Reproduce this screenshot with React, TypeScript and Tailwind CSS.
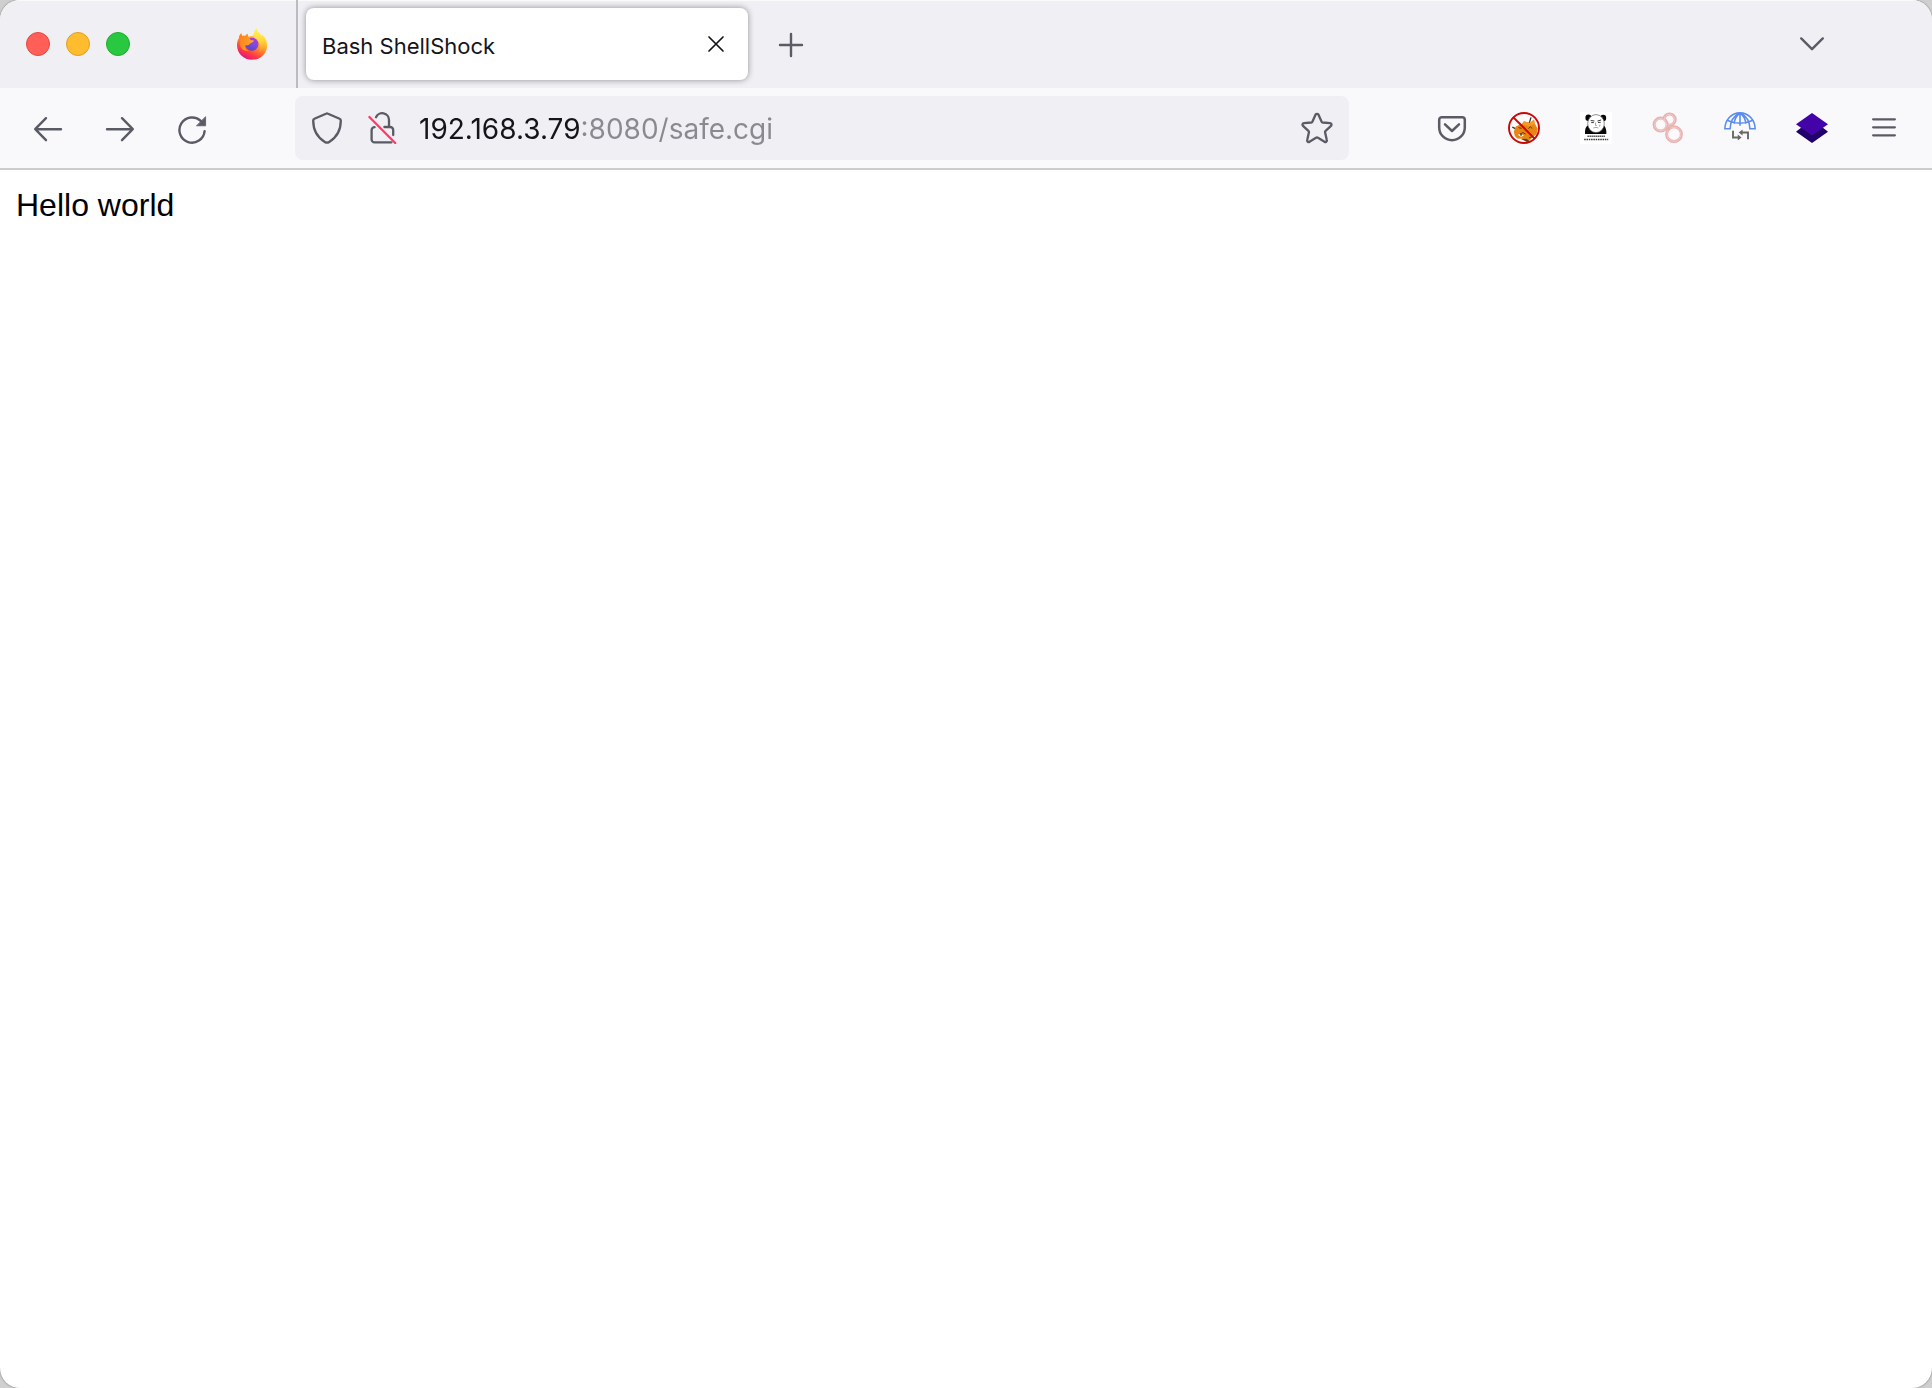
import React from 'react';

type IconProps = { className?: string };

const ArrowLeftIcon: React.FC<IconProps> = ({ className }) => (
  <svg viewBox="0 0 32 32" className={className} fill="none" stroke="currentColor" strokeWidth="2.4" strokeLinecap="round" strokeLinejoin="round">
    <path d="M29 17.2H3.4M14 6.2 3.2 17.2 14 28.2" />
  </svg>
);

const ArrowRightIcon: React.FC<IconProps> = ({ className }) => (
  <svg viewBox="0 0 32 32" className={className} fill="none" stroke="currentColor" strokeWidth="2.4" strokeLinecap="round" strokeLinejoin="round">
    <path d="M3 17.2h25.6M18 6.2l10.8 11L18 28.2" />
  </svg>
);

const ReloadIcon: React.FC<IconProps> = ({ className }) => (
  <svg viewBox="0 0 32 32" className={className} fill="none" stroke="currentColor" strokeWidth="2.4" strokeLinecap="round">
    <path d="M25 9.2A12.6 12.6 0 1 0 28.6 19.2" />
    <path d="M29.6 5v8.800h-8.800z" fill="currentColor" strokeWidth="0.8" strokeLinejoin="round" />
  </svg>
);

const ShieldIcon: React.FC<IconProps> = ({ className }) => (
  <svg viewBox="0 0 32 32" className={className} fill="none" stroke="currentColor" strokeWidth="2.3" strokeLinejoin="round">
    <path d="M15 1.700a2.200 2.200 0 0 1 2 0l11.600 5.100a1.800 1.800 0 0 1 1.200 1.800c0 8.600-3.400 16.400-11.600 21.400a4.200 4.200 0 0 1-4.400 0C5.600 25 2.200 17.200 2.200 8.600a1.800 1.800 0 0 1 1.200-1.800z" />
  </svg>
);

const LockOffIcon: React.FC<IconProps> = ({ className }) => (
  <svg viewBox="0 0 32 32" className={className} fill="none" strokeWidth="2.3" strokeLinecap="round" strokeLinejoin="round">
    <g stroke="#5b5b66">
      <path d="M9 5.200A6.800 6.800 0 0 1 22 8V15" />
      <path d="M17.400 15h5.800a3 3 0 0 1 3 3v5" />
      <path d="M7.600 15.200a3 3 0 0 0-3 3v9.200a3 3 0 0 0 3 3h16.800" />
    </g>
    <path d="M2.400 5 28.200 31" stroke="#ff3b66" strokeWidth="2.300" />
  </svg>
);

const StarIcon: React.FC<IconProps> = ({ className }) => (
  <svg viewBox="0 0 32 32" className={className} fill="none" stroke="currentColor" strokeWidth="2.3" strokeLinejoin="round">
    <path d="M14.500 2.700a1.800 1.800 0 0 1 3 0l3 6.800a1.800 1.800 0 0 0 1.400 1l7.200.7a1.500 1.500 0 0 1 .9 2.600l-5.400 5a1.800 1.800 0 0 0-.5 1.700l1.700 7.600a1.500 1.500 0 0 1-2.300 1.600l-6.500-3.900a2 2 0 0 0-2 0l-6.500 3.900a1.500 1.500 0 0 1-2.300-1.600l1.700-7.600a1.800 1.800 0 0 0-.5-1.700l-5.400-5a1.500 1.500 0 0 1 .9-2.600l7.200-.7a1.800 1.800 0 0 0 1.400-1z" />
  </svg>
);

const PocketIcon: React.FC<IconProps> = ({ className }) => (
  <svg viewBox="0 0 32 32" className={className} fill="none" stroke="currentColor" strokeWidth="2.5" strokeLinecap="round" strokeLinejoin="round">
    <path d="M5.800 5.200h20.400a2.600 2.600 0 0 1 2.600 2.600v7.600a12.800 12.800 0 0 1-25.600 0V7.800a2.600 2.600 0 0 1 2.600-2.600z" />
    <path d="m9 12.400 7 6.600 7-6.600" />
  </svg>
);

const CloseIcon: React.FC<IconProps> = ({ className }) => (
  <svg viewBox="0 0 20 20" className={className} fill="none" stroke="currentColor" strokeWidth="1.7" strokeLinecap="round">
    <path d="m3 3 14 14M17 3 3 17" />
  </svg>
);

const PlusIcon: React.FC<IconProps> = ({ className }) => (
  <svg viewBox="0 0 32 32" className={className} fill="none" stroke="currentColor" strokeWidth="2.4" strokeLinecap="round">
    <path d="M16 6v22M5 17h22" />
  </svg>
);

const ChevronIcon: React.FC<IconProps> = ({ className }) => (
  <svg viewBox="0 0 32 32" className={className} fill="none" stroke="currentColor" strokeWidth="2.4" strokeLinecap="round" strokeLinejoin="round">
    <path d="m5.200 10.400 10.800 10.800 10.800-10.800" />
  </svg>
);

const MenuIcon: React.FC<IconProps> = ({ className }) => (
  <svg viewBox="0 0 32 32" className={className} fill="none" stroke="currentColor" strokeWidth="2.2" strokeLinecap="round">
    <path d="M5.100 7.300h21.800M5.100 15.300h21.800M5.100 23.300h21.800" />
  </svg>
);

const FirefoxLogo: React.FC<IconProps> = ({ className }) => (
  <svg viewBox="0 0 32 32" className={className}>
    <defs>
      <linearGradient id="ff-body" x1="0.8" y1="0.05" x2="0.3" y2="1">
        <stop offset="0.1" stopColor="#fff04a" />
        <stop offset="0.36" stopColor="#ffb92e" />
        <stop offset="0.58" stopColor="#ff7a2a" />
        <stop offset="0.78" stopColor="#ff3a45" />
        <stop offset="1" stopColor="#e2127f" />
      </linearGradient>
      <linearGradient id="ff-globe" x1="0.7" y1="0" x2="0.4" y2="1">
        <stop offset="0" stopColor="#b237e0" />
        <stop offset="0.5" stopColor="#7f4be0" />
        <stop offset="1" stopColor="#5746c4" />
      </linearGradient>
      <linearGradient id="ff-head" x1="0" y1="0" x2="1" y2="0.6">
        <stop offset="0" stopColor="#ff7a1c" />
        <stop offset="1" stopColor="#ffa82a" />
      </linearGradient>
      <linearGradient id="ff-flame" x1="0.5" y1="0" x2="0.6" y2="1">
        <stop offset="0" stopColor="#fff45a" />
        <stop offset="0.55" stopColor="#ffd83a" />
        <stop offset="1" stopColor="#ff8a2a" />
      </linearGradient>
    </defs>
    <path
      d="M20.600.2c.2 2.600 1.600 4 3.600 6 .7.700 1.300 1.500 1.800 2.400.3-.8.3-1.400.2-2 3.200 2.700 5 6.600 5 10.600 0 8.200-6.600 14.600-15.100 14.600S1 25.200 1 17.200c0-3 .7-5.300 1.900-7.200.2-1.700 1-3.400 2.400-4.800.1 1.200.3 2 .8 2.700 1-.2 2-.1 3 .2.700-1 1.600-1.800 2.800-2.300-.3 1.300-.2 2.200.5 3 1.700-1 3.400-1.300 5-1.100.4-2.800 1.300-5.600 3.200-7.500z"
      fill="url(#ff-body)"
    />
    <path d="M20.600.2c.2 2.600 1.600 4 3.600 6 2.800 3 4.600 5.800 4.200 10.200-.3 3.600-2.200 6.600-5.800 8 2-3 2.400-7 .6-10.200-1.400-2.400-4-4-5.600-6.500.2-2.800 1.200-5.700 3-7.500z" fill="url(#ff-flame)" opacity="0.85" />
    <circle cx="15.800" cy="16.200" r="6.600" fill="url(#ff-globe)" />
    <path
      d="M2.900 10c.2-1.700 1-3.400 2.400-4.800.1 1.200.3 2 .8 2.700 1-.2 2-.1 3 .2.700-1 1.600-1.800 2.800-2.300-.3 1.600 0 2.800 1.600 4 .7.500.3 1.300 1 1.900.7.400 2 .5 3.200.5.400.8-.2 1.700-1.700 2.300-1.500.7-2.200.8-2.600 1.700-.4.800-2.200 1.300-4 .8-.8 3.200.8 5.200 3.600 6-4.600.6-8.600-2-8.800-6.400-.1-2.700.7-4-1.300-6.600z"
      fill="url(#ff-head)"
    />
  </svg>
);

const ProxyOffIcon: React.FC<IconProps> = ({ className }) => (
  <svg viewBox="0 0 32 32" className={className}>
    <circle cx="16" cy="16" r="14.800" fill="#fdfbfa" />
    <path d="M4.300 15.200 8 16.800M23 5.400l-1.800 6" stroke="#333" strokeWidth="1.3" fill="none" />
    <path d="m5.800 19.500 2-5 6.200-2.800 2-2.400 6 1.700 4-3.400.8 4.200 2.800 4.600-1 5.600-5 4-3.400 4.200-6-3.400-5-.3-2.400-2.500z" fill="#e98512" />
    <path d="m16 9.300 6 1.700 4-3.400.6 4-5 3-7-2z" fill="#f49a24" />
    <path d="m13 27 5.500-.2 3.500 2.800-3 .3z" fill="#5c4328" />
    <path d="m10.500 15.600 3 .8M20.500 16.500l2-1.800 1.500 1.800M11.500 22.200l3.500-1.600 2.500 1.400M21 25.800l3-1" stroke="#5f3906" strokeWidth="1" fill="none" />
    <path d="m9.500 22.500 4-.3 2.500 1.300-3 1.300z" fill="#fff" />
    <circle cx="13" cy="22.800" r="0.900" fill="#222" />
    <circle cx="16" cy="16" r="15" fill="none" stroke="#cc0505" strokeWidth="1.9" />
    <path d="m5.400 5.400 21.200 21.200" stroke="#cc0505" strokeWidth="2" />
  </svg>
);

const PandaIcon: React.FC<IconProps> = ({ className }) => (
  <svg viewBox="0 0 32 32" className={className}>
    <path d="M0 0h32v32H0z" fill="#fff" />
    <ellipse cx="8.400" cy="5.800" rx="3" ry="3.200" fill="#080808" />
    <ellipse cx="23.200" cy="6" rx="3" ry="3.200" fill="#080808" />
    <path d="M5 22c-.2-4 .5-7 2.500-8.500l8 4 8.500-4c2 2 2.600 5 2.300 8.500z" fill="#080808" />
    <ellipse cx="16" cy="11.600" rx="8.300" ry="9" fill="#fff" stroke="#444" strokeWidth="0.6" />
    <path d="m10.700 8.500 3.700.5M17.500 9l3.700-1M11.200 10.600h2.600M18 10.400h2.700" stroke="#222" strokeWidth="0.9" />
    <path d="M15.600 10.500v3l1.200.1M13.300 16c1.800-.7 3.500-.7 5 0M20 12.500l-.5 2" fill="none" stroke="#777" strokeWidth="0.7" />
    <path d="M7.500 24.300h17.300" stroke="#333" strokeWidth="1.5" strokeDasharray="1.300 .7" />
    <path d="M4.200 27.500h24" stroke="#333" strokeWidth="1.700" strokeDasharray="1.500 .8" />
  </svg>
);

const RingsIcon: React.FC<IconProps> = ({ className }) => (
  <svg viewBox="0 0 32 32" className={className}>
    <g fill="#fdf8fa" stroke="#e9b0b0" strokeWidth="3">
      <circle cx="17.500" cy="7.600" r="5.700" />
      <circle cx="8.600" cy="12.600" r="6.500" />
      <circle cx="22" cy="22.200" r="7.400" />
    </g>
    <g fill="none" stroke="#f0cccc" strokeWidth="1">
      <circle cx="17.500" cy="7.600" r="5.300" />
      <circle cx="8.600" cy="12.600" r="6.100" />
      <circle cx="22" cy="22.200" r="7" />
    </g>
    <path d="m14.800 15.200 3 2.600" stroke="#e9b0b0" strokeWidth="3" />
  </svg>
);

const GlobeSwapIcon: React.FC<IconProps> = ({ className }) => (
  <svg viewBox="0 0 32 32" className={className} fill="none">
    <circle cx="16" cy="16" r="15.300" fill="#fafafc" stroke="#f1f1f4" strokeWidth="0.6" />
    <g stroke="#5b8def" strokeWidth="1.6">
      <path d="M.9 16.800C.9 7.800 7.500.9 16 .9s15.100 6.900 15.100 15.900h-5.200c-.1-7-3.500-13-9.900-15.900C9.600 3.800 6.200 9.800 6.100 16.800z" />
      <path d="M16 1v12.800M16 1c-4 2.700-5.500 6.500-5.800 10.800M16 1c4 2.700 5.500 6.500 5.800 10.800M3.700 8.400C11.500 12 20.500 12 28.300 8.400" />
    </g>
    <path d="M9 18.800v6.700h6M24 27.200v-6.700h-6" stroke="#686868" strokeWidth="1.9" />
    <path d="M13.800 22.600v5.800l3.800-2.900zM18.600 17.600v5.800l-3.900-2.900z" fill="#686868" />
  </svg>
);

const LayersIcon: React.FC<IconProps> = ({ className }) => (
  <svg viewBox="0 0 32 32" className={className}>
    <path d="M0 19.800 6 15h20l6 4.800L16 31z" fill="#20006b" />
    <path d="M16 1 32 12.300 16 23.500 0 12.300z" fill="#4403a8" />
  </svg>
);

const windowControls = [
  { label: 'Close window', color: 'bg-[#ff5f57] border-[#e2483f]' },
  { label: 'Minimize window', color: 'bg-[#febc2e] border-[#dfa023]' },
  { label: 'Zoom window', color: 'bg-[#28c840] border-[#1dad2b]' },
];

const navButtons = [
  { label: 'Back', Icon: ArrowLeftIcon },
  { label: 'Forward', Icon: ArrowRightIcon },
  { label: 'Reload', Icon: ReloadIcon },
];

const extensions = [
  { label: 'Save to Pocket', Icon: PocketIcon },
  { label: 'Proxy disabled', Icon: ProxyOffIcon },
  { label: 'Panda', Icon: PandaIcon },
  { label: 'Rings', Icon: RingsIcon },
  { label: 'User agent switcher', Icon: GlobeSwapIcon },
  { label: 'Layers', Icon: LayersIcon },
  { label: 'Menu', Icon: MenuIcon },
];

const TabBar: React.FC = () => (
  <div className="flex h-[88px] items-center bg-[#f0eff4] text-[#5b5b66] shadow-[inset_0_1px_0_#fafafa]">
    <div className="flex gap-4 pl-[26px]">
      {windowControls.map(({ label, color }) => (
        <button key={label} aria-label={label} className={`size-6 rounded-full border ${color}`} />
      ))}
    </div>
    <button aria-label="Firefox View" className="ml-[106px] mr-7">
      <FirefoxLogo className="size-8" />
    </button>
    <div className="w-0.5 self-stretch bg-[#bcbcc0]" />

    {/* Active tab */}
    <div className="ml-2 flex h-[72px] w-[442px] items-center justify-between rounded-lg bg-white pl-4 pr-[22px] text-[#15141a] shadow-[0_0_6px_rgba(0,0,0,0.4)]">
      <span className="pt-1 text-[22px] leading-7">Bash ShellShock</span>
      <button aria-label="Close tab">
        <CloseIcon className="size-5" />
      </button>
    </div>
    <button aria-label="New tab" className="flex w-[86px] justify-center">
      <PlusIcon className="size-8" />
    </button>
    <button aria-label="List all tabs" className="ml-auto mr-[84px] flex w-[72px] justify-center">
      <ChevronIcon className="size-8" />
    </button>
  </div>
);

const Toolbar: React.FC = () => (
  <div className="flex h-[82px] items-center border-b-2 border-[#cccccf] bg-[#f9f9fb] px-3 text-[#5b5b66]">
    <div className="flex">
      {navButtons.map(({ label, Icon }) => (
        <button key={label} aria-label={label} className="flex w-[72px] justify-center">
          <Icon className="size-8" />
        </button>
      ))}
    </div>

    {/* Address bar */}
    <div className="mx-[67px] flex h-16 min-w-0 flex-1 items-center rounded-lg bg-[#f0eff4] px-4">
      <button aria-label="Tracking protection">
        <ShieldIcon className="size-8" />
      </button>
      <button aria-label="Connection is not secure" className="ml-6">
        <LockOffIcon className="size-8" />
      </button>
      <input
        type="text"
        aria-label="Address"
        defaultValue="192.168.3.79:8080/safe.cgi"
        className="ml-5 h-10 min-w-0 flex-1 bg-[linear-gradient(to_right,#15141a_162px,#8a8990_162px)] bg-clip-text pt-0.5 text-[28px] leading-10 outline-none [-webkit-text-fill-color:transparent]"
      />
      <button aria-label="Bookmark this page">
        <StarIcon className="size-8" />
      </button>
    </div>

    <div className="flex">
      {extensions.map(({ label, Icon }) => (
        <button key={label} aria-label={label} className="flex w-[72px] justify-center">
          <Icon className="size-8" />
        </button>
      ))}
    </div>
  </div>
);

const App: React.FC = () => {
  return (
    <div className="min-h-screen bg-[#cfcfcf] font-['Inter',sans-serif]">
      <div className="flex min-h-screen flex-col overflow-hidden rounded-[20px] bg-white shadow-[0_0_2px_rgba(0,0,0,0.5)]">
        <TabBar />
        <Toolbar />
        <main className="flex-1 p-4 font-['Liberation_Sans',Arial,sans-serif] text-[32px] leading-[38px] text-black">
          Hello world
        </main>
      </div>
    </div>
  );
};

export default App;
